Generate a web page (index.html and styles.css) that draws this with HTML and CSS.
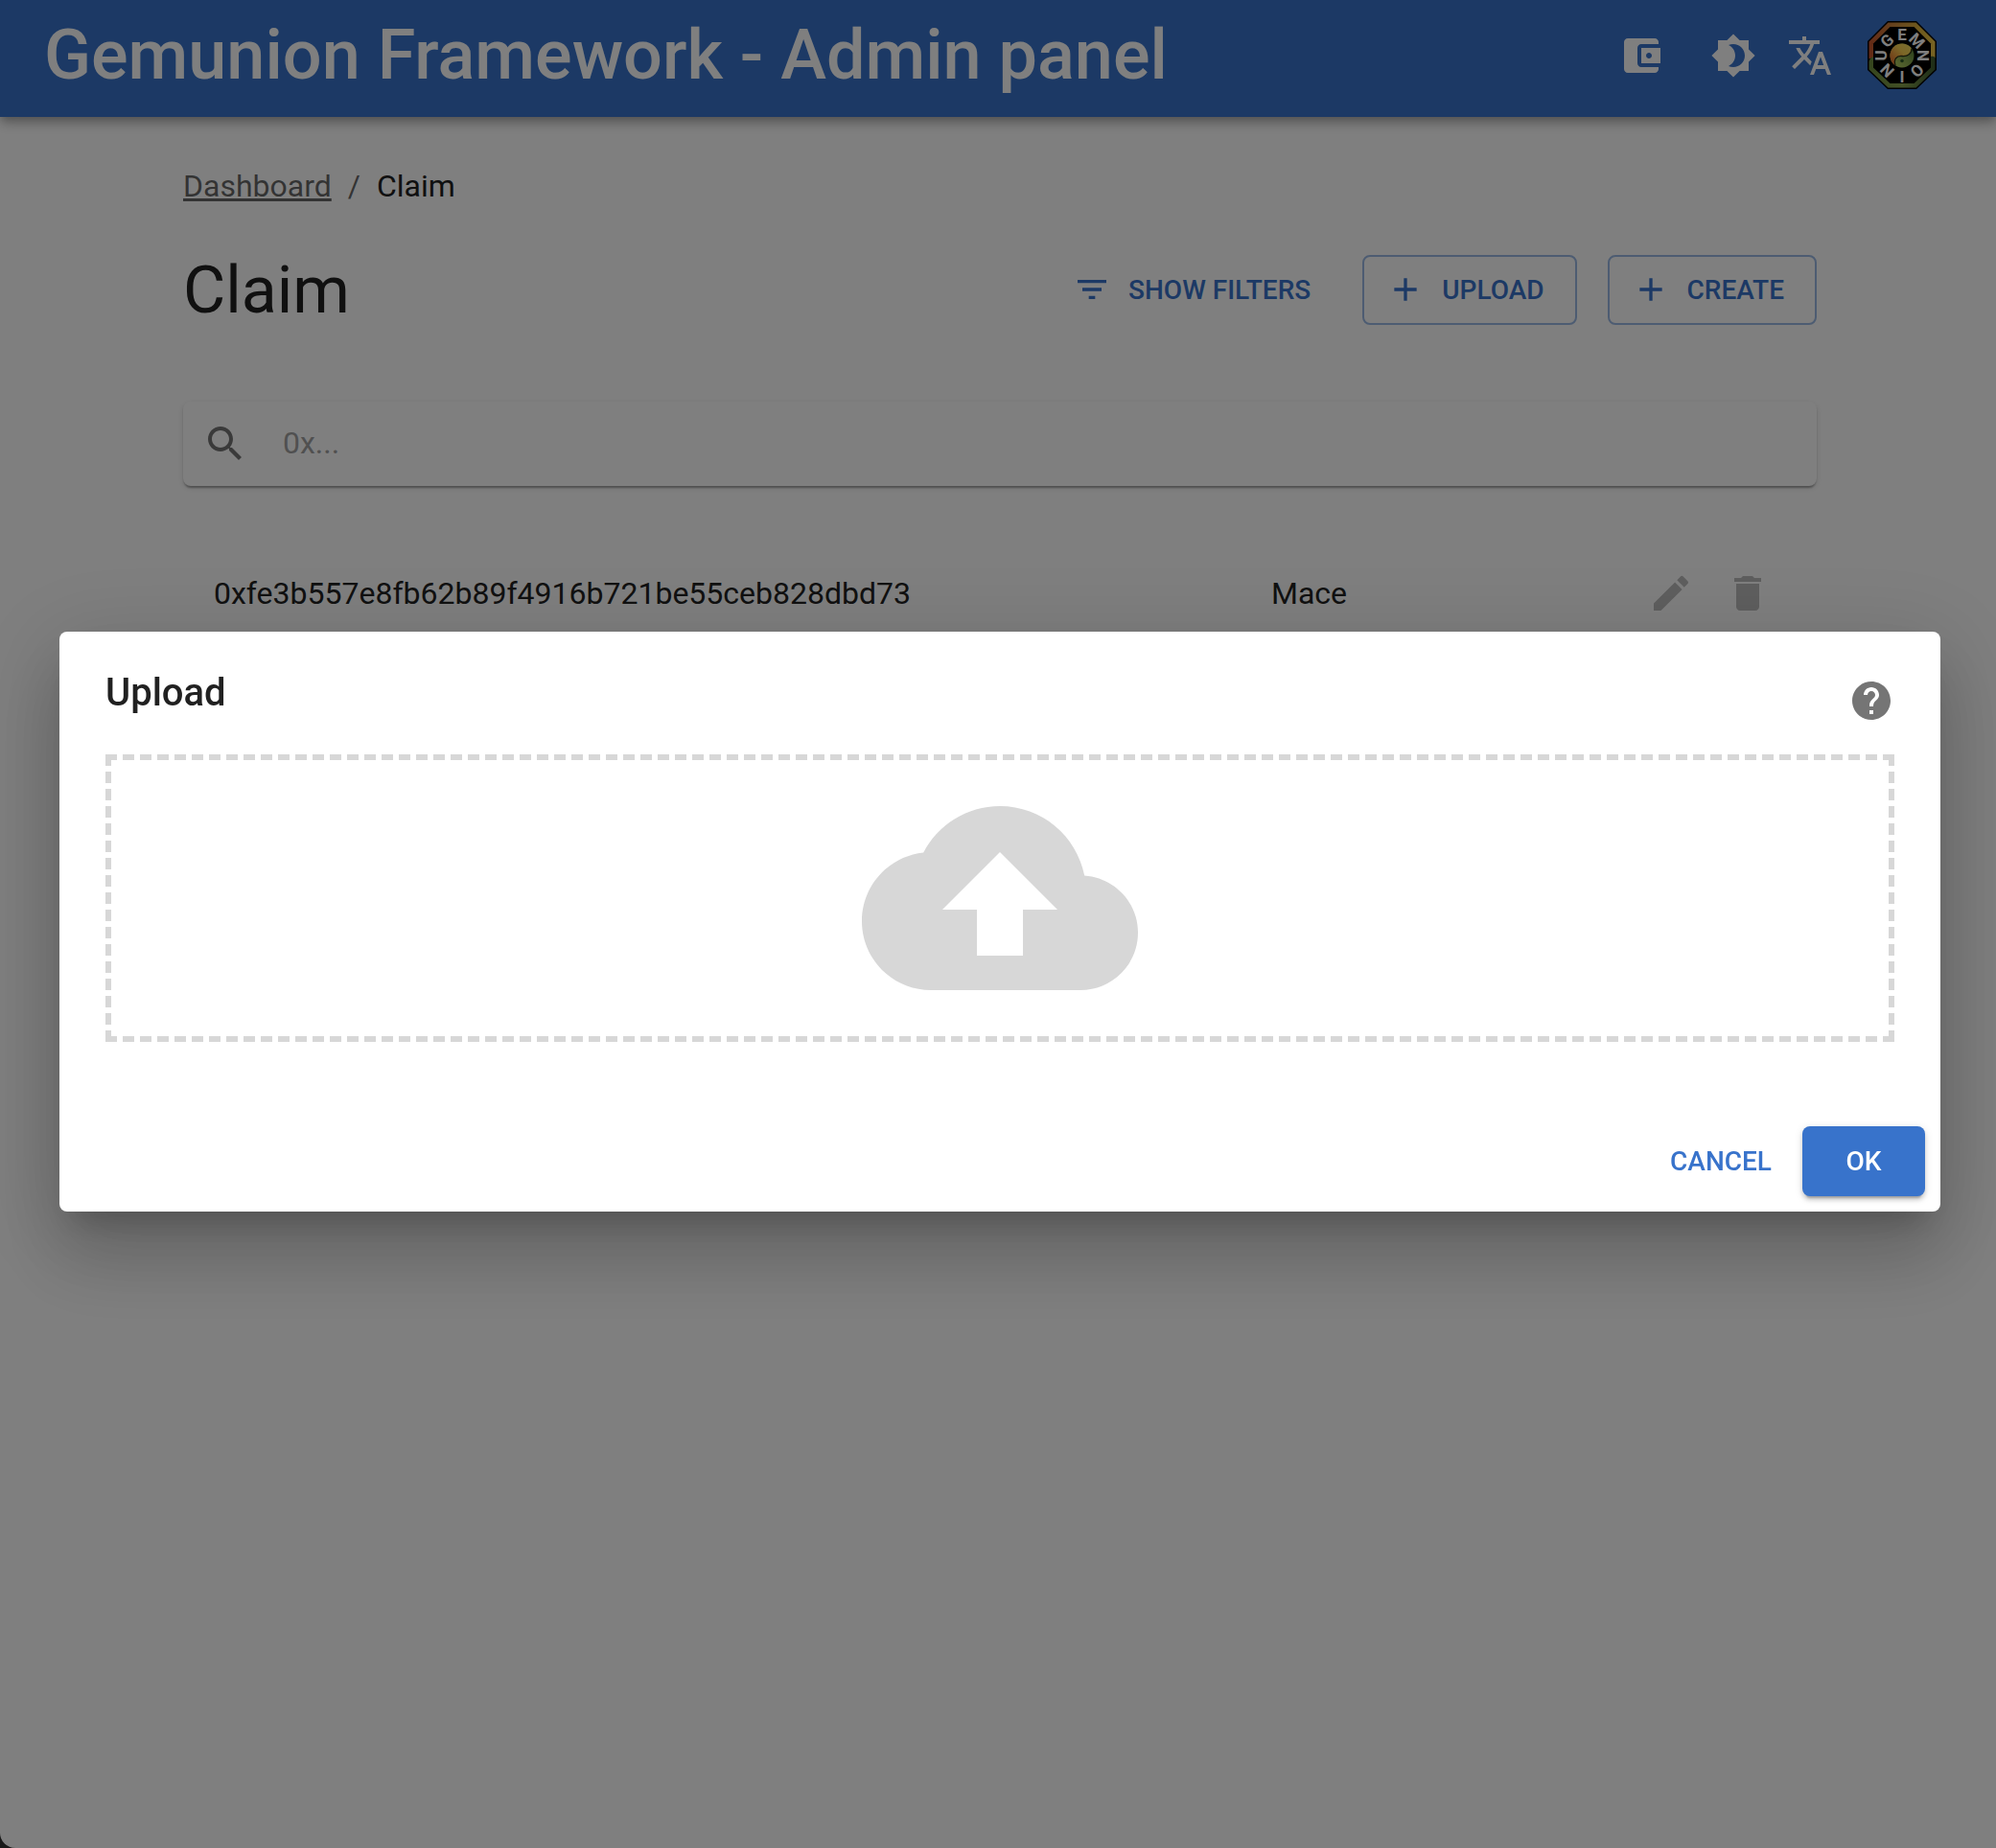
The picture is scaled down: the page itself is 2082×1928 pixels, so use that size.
FILE: index.html
```html
<!DOCTYPE html>
<html lang="en">
<head>
  <meta charset="utf-8">
  <meta name="viewport" content="width=device-width, initial-scale=1">
  <title>Gemunion Framework - Admin panel</title>
  <link rel="stylesheet" href="styles.css">
</head>
<body>
  <div class="page">
    <header class="app-bar">
      <div class="app-title">Gemunion Framework - Admin panel</div>
      <div class="app-actions">
        <button class="icon-button wallet" type="button" aria-label="Wallet">
          <svg class="icon" viewBox="0 0 24 24"><path d="M21 18v1c0 1.1-.9 2-2 2H5c-1.11 0-2-.9-2-2V5c0-1.1.89-2 2-2h14c1.1 0 2 .9 2 2v1h-9c-1.11 0-2 .9-2 2v8c0 1.1.89 2 2 2h9zm-9-2h10V8H12v8zm4-2.5c-.83 0-1.5-.67-1.5-1.5s.67-1.5 1.5-1.5 1.5.67 1.5 1.5-.67 1.5-1.5 1.5z"/></svg>
        </button>
        <button class="icon-button" type="button" aria-label="Theme">
          <svg class="icon" viewBox="0 0 24 24"><path d="M20 8.69V4h-4.69L12 .69 8.69 4H4v4.69L.69 12 4 15.31V20h4.69L12 23.31 15.31 20H20v-4.69L23.31 12 20 8.69zM12 18c-.89 0-1.74-.2-2.5-.55C11.56 16.5 13 14.42 13 12s-1.44-4.5-3.5-5.45C10.26 6.2 11.11 6 12 6c3.31 0 6 2.69 6 6s-2.69 6-6 6z"/></svg>
        </button>
        <button class="icon-button" type="button" aria-label="Language">
          <svg class="icon" viewBox="0 0 24 24"><path d="M12.87 15.07l-2.54-2.51.03-.03c1.74-1.94 2.98-4.17 3.71-6.53H17V4h-7V2H8v2H1v1.99h11.17C11.5 7.92 10.44 9.75 9 11.35 8.07 10.32 7.3 9.19 6.69 8h-2c.73 1.63 1.73 3.17 2.98 4.56l-5.09 5.02L4 19l5-5 3.11 3.11.76-2.04zM18.5 10h-2L12 22h2l1.12-3h4.75L21 22h2l-4.5-12zm-2.62 7l1.62-4.33L19.12 17h-3.24z"/></svg>
        </button>
        <button class="icon-button avatar-button" type="button" aria-label="Account">
          <svg class="avatar" viewBox="0 0 72 72">
            <defs>
              <linearGradient id="rim-top" x1="0" y1="0" x2="1" y2="0">
                <stop offset="0" stop-color="#c8552c"/><stop offset=".35" stop-color="#c8823c"/><stop offset=".8" stop-color="#e0b83c"/><stop offset="1" stop-color="#f0c848"/>
              </linearGradient>
              <linearGradient id="rim-bottom" x1="0" y1="0" x2="1" y2="0">
                <stop offset="0" stop-color="#6a8a3c"/><stop offset=".5" stop-color="#86a04c"/><stop offset="1" stop-color="#3c5a30"/>
              </linearGradient>
              <linearGradient id="yang" x1="0" y1="1" x2="1" y2="0">
                <stop offset="0" stop-color="#e05c28"/><stop offset=".6" stop-color="#f8d050"/><stop offset="1" stop-color="#f0dc60"/>
              </linearGradient>
              <linearGradient id="yin" x1="0" y1="1" x2="1" y2="0">
                <stop offset="0" stop-color="#c8dc68"/><stop offset="1" stop-color="#4c7838"/>
              </linearGradient>
            </defs>
            <path d="M21 0h30l21 21v30L51 71H21L0 51V21z" fill="#000"/>
            <path d="M21.500 1.500h29l20 20v17c-3-2-4-2-7 2H8.500c-4-2-5-2-7-1V21.500z" fill="url(#rim-top)"/>
            <path d="M1.500 42c2-5 4-5 7-4h55c4-2 5-1 7 0v12.500l-20 19h-29l-20-19z" fill="url(#rim-bottom)"/>
            <path d="M23.500 6h25L66 23.500v25L48.500 65h-25L6 48.500v-25z" fill="#000"/>
            <g class="avatar-letters">
              <text x="36" y="20" transform="rotate(-45 36 36)">G</text>
              <text x="36" y="20">E</text>
              <text x="36" y="20" transform="rotate(45 36 36)">M</text>
              <text x="36" y="20" transform="rotate(90 36 36)">N</text>
              <text x="36" y="20" transform="rotate(135 36 36)">O</text>
              <text x="36" y="20" transform="rotate(180 36 36)">I</text>
              <text x="36" y="20" transform="rotate(225 36 36)">N</text>
              <text x="36" y="20" transform="rotate(270 36 36)">U</text>
            </g>
            <circle cx="36" cy="36" r="12.500" fill="url(#yin)"/>
            <path d="M46 28.500A12.500 12.500 0 1 0 29 46.300C27 40 30 36 36 36.500S46 34 46 28.500z" fill="url(#yang)"/>
            <path d="M46 28.500C46 34 42 37 36 36.500S27 40 29 46.300" fill="none" stroke="#2c3014" stroke-width="1.300"/>
            <circle cx="36" cy="41.500" r="1.800" fill="#2f5a28"/>
          </svg>
        </button>
      </div>
    </header>

    <main class="content">
      <nav class="breadcrumbs" aria-label="Breadcrumb">
        <a class="breadcrumb-link" href="#">Dashboard</a>
        <span class="breadcrumb-separator">/</span>
        <span class="breadcrumb-current">Claim</span>
      </nav>

      <div class="page-header">
        <h1 class="page-title">Claim</h1>
        <div class="page-actions">
          <button class="button button-filters" type="button">
            <svg class="button-icon" viewBox="0 0 24 24"><path d="M10 18h4v-2h-4v2zM3 6v2h18V6H3zm3 7h12v-2H6v2z"/></svg>
            SHOW FILTERS
          </button>
          <button class="button button-outlined" type="button">
            <svg class="button-icon" viewBox="0 0 24 24"><path d="M19 13h-6v6h-2v-6H5v-2h6V5h2v6h6v2z"/></svg>
            UPLOAD
          </button>
          <button class="button button-outlined" type="button">
            <svg class="button-icon" viewBox="0 0 24 24"><path d="M19 13h-6v6h-2v-6H5v-2h6V5h2v6h6v2z"/></svg>
            CREATE
          </button>
        </div>
      </div>

      <form class="search">
        <svg class="icon search-icon" viewBox="0 0 24 24"><path d="M15.500 14h-.79l-.28-.27C15.410 12.590 16 11.110 16 9.500 16 5.910 13.090 3 9.500 3S3 5.910 3 9.500 5.910 16 9.500 16c1.610 0 3.090-.59 4.230-1.570l.27.28v.79l5 4.990L20.490 19l-4.990-5zm-6 0C7.010 14 5 11.990 5 9.500S7.010 5 9.500 5 14 7.010 14 9.500 11.990 14 9.500 14z"/></svg>
        <input class="search-input" type="text" placeholder="0x..." aria-label="Search by address">
      </form>

      <ul class="claims">
        <li class="claim">
          <span>0xfe3b557e8fb62b89f4916b721be55ceb828dbd73</span>
          <span>Mace</span>
          <span class="claim-actions">
            <button class="icon-button" type="button" aria-label="Edit" disabled>
              <svg class="icon" viewBox="0 0 24 24"><path d="M3 17.250V21h3.750L17.810 9.940l-3.750-3.750L3 17.250zM20.710 7.040c.39-.39.39-1.020 0-1.410l-2.340-2.340a.9959.9959 0 0 0-1.410 0l-1.830 1.830 3.750 3.750 1.830-1.830z"/></svg>
            </button>
            <button class="icon-button" type="button" aria-label="Delete" disabled>
              <svg class="icon" viewBox="0 0 24 24"><path d="M6 19c0 1.100.9 2 2 2h8c1.100 0 2-.9 2-2V7H6v12zM19 4h-3.500l-1-1h-5l-1 1H5v2h14V4z"/></svg>
            </button>
          </span>
        </li>
      </ul>
    </main>
  </div>

  <div class="backdrop">
    <section class="dialog" role="dialog" aria-modal="true" aria-labelledby="dialog-title">
      <div class="dialog-header">
        <h2 class="dialog-title" id="dialog-title">Upload</h2>
        <button class="help-button" type="button" aria-label="Help">
          <svg class="icon" viewBox="0 0 24 24"><path d="M12 2C6.480 2 2 6.480 2 12s4.480 10 10 10 10-4.480 10-10S17.520 2 12 2zm1 17h-2v-2h2v2zm2.070-7.750l-.9.920C13.450 12.900 13 13.500 13 15h-2v-.5c0-1.100.45-2.100 1.170-2.830l1.240-1.260c.37-.36.59-.86.59-1.410 0-1.100-.9-2-2-2s-2 .9-2 2H8c0-2.210 1.790-4 4-4s4 1.790 4 4c0 .88-.36 1.680-.93 2.250z"/></svg>
        </button>
      </div>
      <div class="dialog-content">
        <button class="dropzone" type="button" aria-label="Choose a file to upload">
          <svg class="dropzone-icon" viewBox="0 0 24 24"><path d="M19.350 10.040C18.670 6.590 15.640 4 12 4 9.110 4 6.600 5.640 5.350 8.040 2.340 8.360 0 10.910 0 14c0 3.310 2.690 6 6 6h13c2.760 0 5-2.240 5-5 0-2.640-2.050-4.780-4.650-4.960zM14 13v4h-4v-4H7l5-5 5 5h-3z"/></svg>
        </button>
      </div>
      <div class="dialog-actions">
        <button class="button" type="button">CANCEL</button>
        <button class="button button-contained" type="button">OK</button>
      </div>
    </section>
  </div>
</body>
</html>
```
FILE: styles.css
```css
*,
*::before,
*::after {
  box-sizing: border-box;
}

html {
  background: #333;
}

body {
  margin: 0;
  font-family: Roboto, "Liberation Sans", sans-serif;
  font-size: 32px;
  line-height: 48px;
  color: #212121;
}

h1,
h2,
ul {
  margin: 0;
  padding: 0;
}

button,
input {
  font: inherit;
  color: inherit;
  background: none;
  border: 0;
  padding: 0;
  margin: 0;
}

svg {
  display: block;
  fill: currentColor;
}

.page {
  min-height: 100vh;
  background: #fff;
  border-bottom-left-radius: 16px;
}

/* App bar */

.app-bar {
  display: flex;
  align-items: center;
  justify-content: space-between;
  padding: 0 42px 6px 46px;
  background: #3873cb;
  color: #fff;
  box-shadow: 0 4px 8px -2px rgba(0, 0, 0, .2), 0 8px 10px 0 rgba(0, 0, 0, .14), 0 2px 20px 0 rgba(0, 0, 0, .12);
}

.app-title {
  font-size: 72px;
  font-weight: 500;
  line-height: 116px;
}

.app-actions {
  display: flex;
  align-items: center;
}

.icon {
  width: 48px;
  height: 48px;
}

.icon-button {
  padding: 16px;
}

.icon-button:disabled {
  color: rgba(0, 0, 0, .26);
}

.wallet {
  margin-right: 16px;
}

.avatar-button {
  padding: 20px;
}

.avatar {
  width: 72px;
  height: 72px;
}

.avatar-letters {
  fill: #fff;
  font-size: 17px;
  font-weight: 700;
  text-anchor: middle;
}

/* Page content */

.content {
  padding: 48px 187px 48px 191px;
}

.breadcrumbs {
  display: flex;
  gap: 17px;
  color: rgba(0, 0, 0, .6);
}

.breadcrumb-link {
  color: inherit;
}

.breadcrumb-current {
  color: #212121;
}

.page-header {
  display: flex;
  align-items: center;
  justify-content: space-between;
  margin-top: 43px;
}

.page-title {
  font-size: 68px;
  font-weight: 400;
  line-height: 84px;
}

.page-actions {
  display: flex;
  gap: 32px;
  padding-bottom: 2px;
}

.button {
  display: flex;
  align-items: center;
  justify-content: center;
  gap: 18px;
  padding: 12px 16px;
  border-radius: 8px;
  font-size: 28px;
  font-weight: 500;
  line-height: 49px;
  color: #3873cb;
}

.button-icon {
  width: 40px;
  height: 40px;
}

.button-filters {
  padding-right: 22px;
}

.button-outlined {
  padding: 10px 32px 10px 23px;
  border: 2px solid rgba(56, 115, 203, .5);
}

.button-contained {
  min-width: 128px;
  background: #3873cb;
  color: #fff;
  box-shadow: 0 6px 2px -4px rgba(0, 0, 0, .2), 0 4px 4px 0 rgba(0, 0, 0, .14), 0 2px 10px 0 rgba(0, 0, 0, .12);
}

.search {
  display: flex;
  align-items: center;
  gap: 36px;
  margin-top: 74px;
  padding: 20px;
  border-radius: 8px;
  background: #fff;
  box-shadow: 0 4px 2px -2px rgba(0, 0, 0, .2), 0 2px 2px 0 rgba(0, 0, 0, .14), 0 2px 6px 0 rgba(0, 0, 0, .12);
}

.search-icon {
  color: rgba(0, 0, 0, .54);
}

.search-input {
  flex: 1;
  min-width: 0;
  height: 48px;
  padding-bottom: 2px;
  outline: 0;
}

.search-input::placeholder {
  color: #212121;
  opacity: .42;
}

.claims {
  margin-top: 72px;
  list-style: none;
}

.claim {
  display: grid;
  grid-template-columns: minmax(0, 1fr) 377px auto;
  align-items: center;
  padding: 0 32px;
}

.claim-actions {
  display: flex;
}

/* Upload dialog */

.backdrop {
  position: fixed;
  inset: 0;
  display: flex;
  align-items: center;
  padding: 0 58px 6px 62px;
  background: rgba(0, 0, 0, .5);
}

.dialog {
  flex: 1;
  border-radius: 8px;
  background: #fff;
  box-shadow: 0 22px 30px -14px rgba(0, 0, 0, .2), 0 48px 76px 6px rgba(0, 0, 0, .14), 0 18px 92px 16px rgba(0, 0, 0, .12);
}

.dialog-header {
  display: flex;
  align-items: flex-end;
  justify-content: space-between;
  padding: 32px 48px;
}

.dialog-title {
  font-size: 40px;
  font-weight: 500;
  line-height: 64px;
}

.help-button {
  color: rgba(0, 0, 0, .54);
}

.dialog-content {
  padding: 0 48px 72px;
}

.dropzone {
  display: flex;
  justify-content: center;
  width: 100%;
  border: 6px dashed #d7d7d7;
  color: #d7d7d7;
}

.dropzone-icon {
  width: 288px;
  height: 288px;
}

.dialog-actions {
  display: flex;
  justify-content: flex-end;
  gap: 16px;
  padding: 16px;
}
```
